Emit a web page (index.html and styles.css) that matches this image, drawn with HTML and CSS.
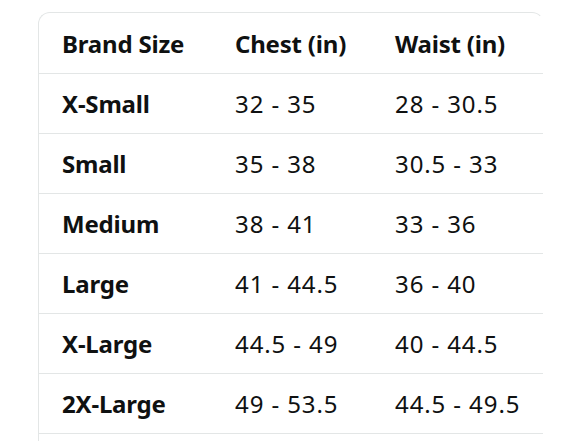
FILE: index.html
```html
<!DOCTYPE html>
<html>
<head>
<meta charset="utf-8">
<link rel="stylesheet" href="styles.css">
</head>
<body>
<div class="card">
  <table class="sizes">
    <colgroup>
      <col class="c1"><col class="c2"><col class="c3">
    </colgroup>
    <thead>
      <tr><th>Brand Size</th><th>Chest (in)</th><th>Waist (in)</th></tr>
    </thead>
    <tbody>
      <tr><th>X-Small</th><td>32 - 35</td><td>28 - 30.5</td></tr>
      <tr><th>Small</th><td>35 - 38</td><td>30.5 - 33</td></tr>
      <tr><th>Medium</th><td>38 - 41</td><td>33 - 36</td></tr>
      <tr><th>Large</th><td>41 - 44.5</td><td>36 - 40</td></tr>
      <tr><th>X-Large</th><td>44.5 - 49</td><td>40 - 44.5</td></tr>
      <tr><th>2X-Large</th><td>49 - 53.5</td><td>44.5 - 49.5</td></tr>
    </tbody>
  </table>
</div>
</body>
</html>
```

FILE: styles.css
```css
html, body {
  margin: 0;
  padding: 0;
  background: #ffffff;
  overflow: hidden;
  height: 441px;
}
body {
  padding: 12px 0 0 38px;
  box-sizing: border-box;
  font-family: "Noto Sans", "Liberation Sans", sans-serif;
  color: #0f1111;
}
.card {
  width: 504px;
  border: 1px solid #e3e6e6;
  border-right-color: transparent;
  border-bottom: none;
  border-radius: 12px 12px 0 0;
  padding-bottom: 40px;
}
.sizes {
  border-collapse: collapse;
  width: 504px;
  table-layout: fixed;
}
.c1 { width: 173px; }
.c2 { width: 160px; }
.c3 { width: 171px; }
.sizes th, .sizes td {
  box-sizing: border-box;
  height: 60px;
  padding: 2px 0 0 23px;
  text-align: left;
  vertical-align: middle;
  font-size: 24px;
  line-height: 28px;
  border-bottom: 1px solid #e3e6e6;
  white-space: nowrap;
  overflow: hidden;
}
.sizes th { font-weight: 700; letter-spacing: -0.2px; }
.sizes td { font-weight: 400; letter-spacing: 0.9px; }
```
